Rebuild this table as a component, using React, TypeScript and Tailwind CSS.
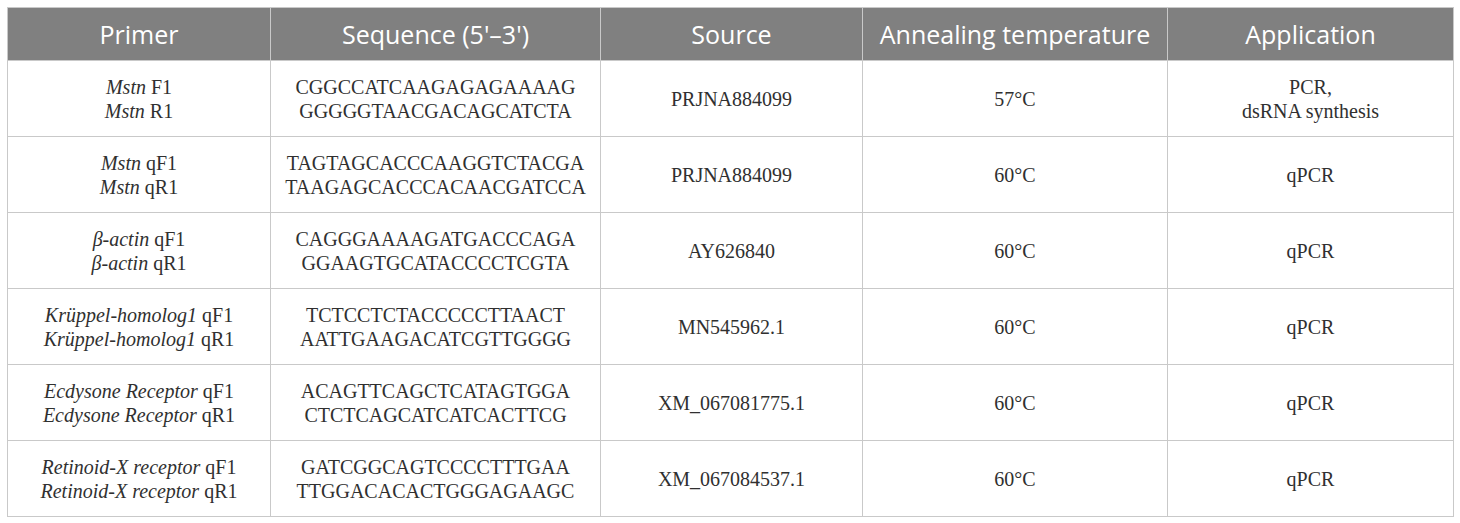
import React from "react";

type Row = { p: [React.ReactNode, React.ReactNode]; s: [string, string]; src: string; t: string; app: React.ReactNode };

const I = ({ children }: { children: React.ReactNode }) => <i className="italic">{children}</i>;

const rows: Row[] = [
  { p: [<><I>Mstn</I> F1</>, <><I>Mstn</I> R1</>], s: ["CGGCCATCAAGAGAGAAAAG", "GGGGGTAACGACAGCATCTA"], src: "PRJNA884099", t: "57°C", app: <>PCR,<br />dsRNA synthesis</> },
  { p: [<><I>Mstn</I> qF1</>, <><I>Mstn</I> qR1</>], s: ["TAGTAGCACCCAAGGTCTACGA", "TAAGAGCACCCACAACGATCCA"], src: "PRJNA884099", t: "60°C", app: "qPCR" },
  { p: [<><I>β-actin</I> qF1</>, <><I>β-actin</I> qR1</>], s: ["CAGGGAAAAGATGACCCAGA", "GGAAGTGCATACCCCTCGTA"], src: "AY626840", t: "60°C", app: "qPCR" },
  { p: [<><I>Krüppel-homolog1</I> qF1</>, <><I>Krüppel-homolog1</I> qR1</>], s: ["TCTCCTCTACCCCCTTAACT", "AATTGAAGACATCGTTGGGG"], src: "MN545962.1", t: "60°C", app: "qPCR" },
  { p: [<><I>Ecdysone Receptor</I> qF1</>, <><I>Ecdysone Receptor</I> qR1</>], s: ["ACAGTTCAGCTCATAGTGGA", "CTCTCAGCATCATCACTTCG"], src: "XM_067081775.1", t: "60°C", app: "qPCR" },
  { p: [<><I>Retinoid-X receptor</I> qF1</>, <><I>Retinoid-X receptor</I> qR1</>], s: ["GATCGGCAGTCCCCTTTGAA", "TTGGACACACTGGGAGAAGC"], src: "XM_067084537.1", t: "60°C", app: "qPCR" },
];

const headers = ["Primer", "Sequence (5'–3')", "Source", "Annealing temperature", "Application"];
const widths = ["w-[263px]", "w-[330px]", "w-[262px]", "w-[305px]", "w-[286px]"];

export default function App() {
  return (
    <div className="w-[1460px] h-[523px] bg-white pt-[7px] pl-[7px]">
      <table className="w-[1446px] border-collapse table-fixed">
        <colgroup>
          {widths.map((w, i) => (
            <col key={i} className={w} />
          ))}
        </colgroup>
        <thead>
          <tr className="h-[53px] bg-[#808080]">
            {headers.map((h, i) => (
              <th
                key={i}
                className="border border-[#c9c9c9] text-white font-normal text-[25px] leading-[30px] text-center align-middle px-1 font-['Open_Sans',sans-serif]"
              >
                {h}
              </th>
            ))}
          </tr>
        </thead>
        <tbody className="text-[20px] leading-[24px] text-[#303030] font-['Liberation_Serif',serif]">
          {rows.map((r, i) => (
            <tr key={i} className="h-[76px]">
              <td className="border border-[#c9c9c9] text-center align-middle">
                {r.p[0]}
                <br />
                {r.p[1]}
              </td>
              <td className="border border-[#c9c9c9] text-center align-middle">
                {r.s[0]}
                <br />
                {r.s[1]}
              </td>
              <td className="border border-[#c9c9c9] text-center align-middle">{r.src}</td>
              <td className="border border-[#c9c9c9] text-center align-middle">{r.t}</td>
              <td className="border border-[#c9c9c9] text-center align-middle">{r.app}</td>
            </tr>
          ))}
        </tbody>
      </table>
    </div>
  );
}
